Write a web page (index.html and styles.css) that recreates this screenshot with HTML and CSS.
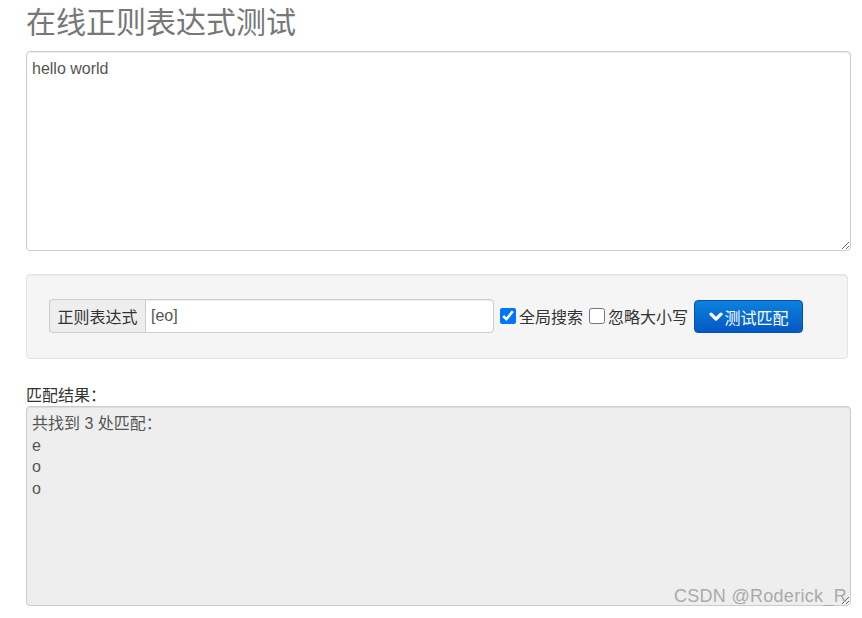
FILE: index.html
```html
<!DOCTYPE html>
<html lang="zh">
<head>
<meta charset="utf-8">
<title>在线正则表达式测试</title>
<link rel="stylesheet" href="styles.css">
</head>
<body>
<div class="container">
  <h1 class="title">在线正则表达式测试</h1>
  <textarea class="src-text">hello world</textarea>
  <div class="well">
    <div class="form-row">
      <div class="input-group">
        <span class="addon">正则表达式</span>
        <input class="regex-input" type="text" value="[eo]">
      </div>
      <label class="check"><input type="checkbox" checked><span>全局搜索</span></label>
      <label class="check"><input type="checkbox"><span>忽略大小写</span></label>
      <button class="btn-primary" type="button"><svg class="chev" width="14" height="10" viewBox="0 0 14 10"><path d="M2 2.2 L7 7 L12 2.2" fill="none" stroke="#fff" stroke-width="3.2" stroke-linecap="round" stroke-linejoin="round"/></svg><span>测试匹配</span></button>
    </div>
  </div>
  <div class="result-label">匹配结果：</div>
  <div class="result-wrap">
    <textarea class="result-text" readonly>共找到 3 处匹配：
e
o
o</textarea>
    <span class="watermark">CSDN @Roderick_R</span>
  </div>
</div>
</body>
</html>
```
FILE: styles.css
```css
* { box-sizing: border-box; }
html, body { margin: 0; padding: 0; background: #fff; }
body {
  font-family: "Liberation Sans", "Noto Sans CJK SC", sans-serif;
  font-size: 16px;
  color: #333;
}
.container {
  width: 862px;
  padding: 0 11px 0 26px;
}
.title {
  margin: 0;
  padding-top: 5px;
  height: 51px;
  font-size: 30px;
  font-weight: normal;
  line-height: 36px;
  color: #777;
}
textarea {
  display: block;
  width: 825px;
  height: 200px;
  padding: 6px 5px;
  font-family: "Liberation Sans", "Noto Sans CJK SC", sans-serif;
  font-size: 16px;
  line-height: 21.7px;
  color: #555;
  border: 1px solid #ccc;
  border-radius: 4px;
  box-shadow: inset 0 1px 1px rgba(0,0,0,0.075);
  resize: vertical;
  outline: none;
  margin: 0;
}
.src-text { background: #fff; }
.well {
  margin-top: 23px;
  width: 822px;
  height: 85px;
  background: #f5f5f5;
  border: 1px solid #e3e3e3;
  border-radius: 4px;
  padding: 24px 22px 0 22px;
  box-shadow: inset 0 1px 1px rgba(0,0,0,0.05);
}
.form-row {
  display: flex;
  align-items: center;
  height: 34px;
}
.input-group {
  display: flex;
  height: 34px;
}
.addon {
  display: flex;
  align-items: center;
  justify-content: center;
  width: 96px;
  background: #eee;
  border: 1px solid #ccc;
  border-right: none;
  border-radius: 4px 0 0 4px;
  color: #333;
}
.regex-input {
  width: 349px;
  height: 34px;
  margin: 0;
  padding: 0 5px;
  border: 1px solid #ccc;
  border-radius: 0 4px 4px 0;
  font-family: "Liberation Sans", "Noto Sans CJK SC", sans-serif;
  font-size: 16px;
  color: #555;
  background: #fff;
  outline: none;
  box-shadow: inset 0 1px 1px rgba(0,0,0,0.075);
}
.check {
  display: flex;
  align-items: center;
  margin-left: 6px;
  color: #333;
}
.check input {
  width: 16px;
  height: 16px;
  margin: 0 3px 0 0;
  accent-color: #0075ff;
}
.btn-primary {
  display: flex;
  align-items: center;
  justify-content: center;
  gap: 2px;
  margin-left: 6px;
  width: 109px;
  height: 33px;
  margin-top: 1px;
  padding: 0;
  border: 1px solid #0550b8;
  border-radius: 4px;
  background: linear-gradient(#0b82de, #0558c4);
  color: #fff;
  font-family: "Liberation Sans", "Noto Sans CJK SC", sans-serif;
  font-size: 16px;
}
.chev { display: block; }
.result-label {
  margin-top: 26px;
  height: 21px;
  line-height: 21px;
  color: #333;
}
.result-wrap {
  position: relative;
  width: 825px;
}
.result-text {
  background: #eee;
  resize: vertical;
}
.watermark {
  position: absolute;
  right: 4px;
  bottom: -2px;
  font-size: 18px;
  line-height: 24px;
  color: #aaa;
  pointer-events: none;
  letter-spacing: 0.3px;
}
```
